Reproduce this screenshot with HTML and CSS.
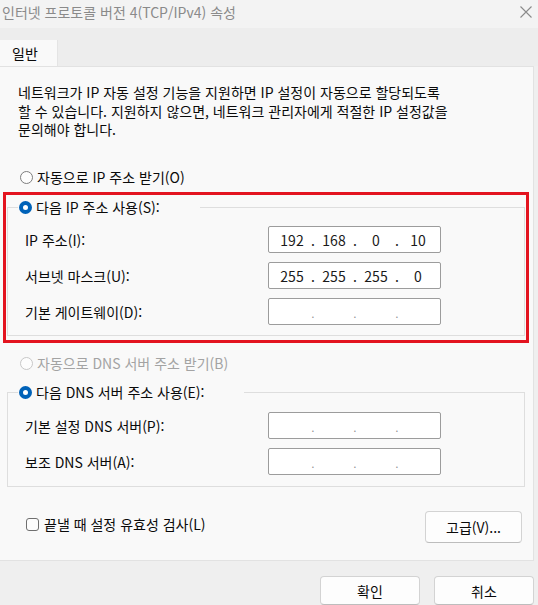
FILE: index.html
```html
<!DOCTYPE html>
<html lang="ko">
<head>
<meta charset="utf-8">
<title>인터넷 프로토콜 버전 4(TCP/IPv4) 속성</title>
<link rel="stylesheet" href="styles.css">
</head>
<body>
<div class="window">
  <header class="titlebar">
    <span class="title">인터넷 프로토콜 버전 4(TCP/IPv4) 속성</span>
    <svg class="close" width="12" height="12" viewBox="0 0 12 12"><path d="M0.5 0.5L11.5 11.5M11.5 0.5L0.5 11.5" stroke="#8a8a8a" stroke-width="1.1" fill="none"/></svg>
  </header>
  <div class="tabstrip"><div class="tab">일반</div></div>
  <section class="panel">
    <p class="desc">네트워크가 IP 자동 설정 기능을 지원하면 IP 설정이 자동으로 할당되도록<br>할 수 있습니다. 지원하지 않으면, 네트워크 관리자에게 적절한 IP 설정값을<br>문의해야 합니다.</p>
    <div class="option first"><span class="radio"></span>자동으로 IP 주소 받기(O)</div>
    <fieldset class="group ipgroup">
      <legend class="option"><span class="radio checked"></span>다음 IP 주소 사용(S):</legend>
      <div class="fields">
        <span class="label">IP 주소(I):</span>
        <div class="ip"><span class="seg">192</span><span class="dot">.</span><span class="seg">168</span><span class="dot">.</span><span class="seg">0</span><span class="dot">.</span><span class="seg">10</span></div>
        <span class="label">서브넷 마스크(U):</span>
        <div class="ip"><span class="seg">255</span><span class="dot">.</span><span class="seg">255</span><span class="dot">.</span><span class="seg">255</span><span class="dot">.</span><span class="seg">0</span></div>
        <span class="label">기본 게이트웨이(D):</span>
        <div class="ip empty"><span class="seg"></span><span class="dot">.</span><span class="seg"></span><span class="dot">.</span><span class="seg"></span><span class="dot">.</span><span class="seg"></span></div>
      </div>
    </fieldset>
    <div class="option disabled dnsauto"><span class="radio"></span>자동으로 DNS 서버 주소 받기(B)</div>
    <fieldset class="group dnsgroup">
      <legend class="option"><span class="radio checked"></span>다음 DNS 서버 주소 사용(E):</legend>
      <div class="fields">
        <span class="label">기본 설정 DNS 서버(P):</span>
        <div class="ip empty"><span class="seg"></span><span class="dot">.</span><span class="seg"></span><span class="dot">.</span><span class="seg"></span><span class="dot">.</span><span class="seg"></span></div>
        <span class="label">보조 DNS 서버(A):</span>
        <div class="ip empty"><span class="seg"></span><span class="dot">.</span><span class="seg"></span><span class="dot">.</span><span class="seg"></span><span class="dot">.</span><span class="seg"></span></div>
      </div>
    </fieldset>
    <div class="bottomrow">
      <div class="option check"><span class="checkbox"></span>끝낼 때 설정 유효성 검사(L)</div>
      <button class="btn advanced">고급(V)...</button>
    </div>
  </section>
  <div class="footer">
    <button class="btn action">확인</button>
    <button class="btn action">취소</button>
  </div>
  <div class="highlight"></div>
</div>
</body>
</html>
```

FILE: styles.css
```css
* { box-sizing: border-box; }
html, body { margin: 0; padding: 0; }
body {
  width: 538px;
  height: 605px;
  overflow: hidden;
  background: #efefef;
  font-family: "Noto Sans CJK KR", "Noto Sans", sans-serif;
  font-size: 14px;
  color: #0a0a0a;
}
.window { position: relative; width: 538px; height: 605px; }
.titlebar {
  height: 28px;
  background: #f3f3f3;
  display: flex;
  justify-content: space-between;
  align-items: flex-start;
  padding: 3px 6px 0 2px;
}
.title { color: #8a8a8a; line-height: 18px; }
.close { margin-top: 3px; }
.tabstrip {
  background: #ededed;
  padding-top: 12px;
  height: 38px;
}
.tab {
  width: 58px;
  height: 26px;
  background: #f9f9f9;
  border-right: 1px solid #e4e4e4;
  padding-left: 12px;
  line-height: 26px;
  position: relative;
  z-index: 1;
  margin-bottom: -1px;
}
.panel {
  width: 534px;
  height: 495px;
  background: #f9f9f9;
  border: 1px solid #e2e2e2;
  border-left: none;
  padding-top: 16px;
}
.desc {
  margin: 0 0 0 18px;
  line-height: 18.5px;
}
.option {
  display: flex;
  align-items: center;
  height: 18px;
  line-height: 18px;
  white-space: nowrap;
}
.option.first { margin: 29.5px 0 0 20px; }
.radio {
  width: 13px;
  height: 13px;
  border-radius: 50%;
  border: 1px solid #7d7d7d;
  background: #fdfdfd;
  margin-right: 4px;
  flex: none;
}
.radio.checked {
  border: 4px solid #0062b8;
  background: #ffffff;
}
.option.disabled { color: #a3a3a3; }
.option.disabled .radio { border-color: #c8c8c8; }
.dnsauto { margin: 18px 0 0 20px; }
.group {
  margin: 0 8px 0 7px;
  border: 1px solid #dedede;
  padding: 10px 0 10px 0;
  min-width: 0;
}
.ipgroup { margin-top: 12px; }
.dnsgroup { margin-top: 11px; padding-top: 11px; padding-bottom: 11px; }
.group legend {
  margin-left: 10px;
  padding: 0 40px 0 1px;
}
.fields {
  display: grid;
  grid-template-columns: 243px 173px;
  row-gap: 9px;
  padding-left: 17px;
  align-items: center;
}
.label { line-height: 18px; }
.ip {
  height: 27px;
  border: 1px solid #9c9c9c;
  border-radius: 2px;
  background: #ffffff;
  display: flex;
  align-items: center;
  padding-left: 5px;
  line-height: 18px;
  color: #1a1a1a;
}
.seg { width: 36px; text-align: center; }
.dot { width: 6px; text-align: center; }
.ip.empty .dot { color: #8a8a8a; font-size: 10px; padding-top: 4px; }
.bottomrow {
  display: flex;
  justify-content: space-between;
  align-items: flex-start;
  margin-top: 24px;
  padding: 0 11px 0 26px;
}
.check { margin-top: 4px; }
.checkbox {
  width: 13px;
  height: 13px;
  border: 1px solid #6f6f6f;
  border-radius: 3px;
  background: #fdfdfd;
  margin-right: 5px;
}
.btn {
  font-family: inherit;
  font-size: 14px;
  color: #0a0a0a;
  background: #fdfdfd;
  border: 1px solid #d3d3d3;
  border-bottom-color: #bdbdbd;
  border-radius: 4px;
  padding: 0;
}
.advanced { width: 97px; height: 32px; }
.footer {
  display: flex;
  justify-content: flex-end;
  gap: 14px;
  padding: 15px 4px 0 0;
}
.action { width: 100px; height: 29px; }
.highlight {
  position: absolute;
  left: 3px;
  top: 192px;
  width: 526px;
  height: 151px;
  border: 3px solid #e3141f;
  pointer-events: none;
}
```
